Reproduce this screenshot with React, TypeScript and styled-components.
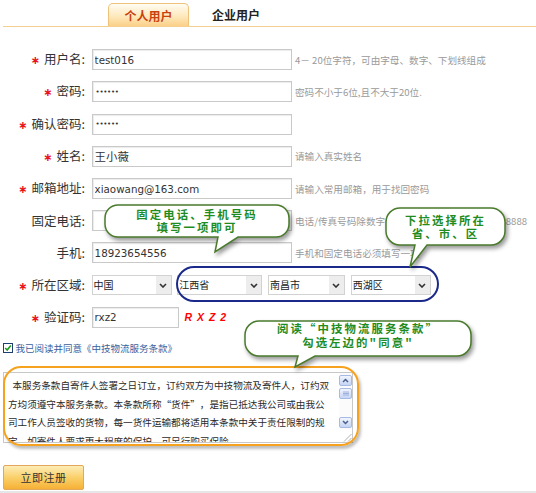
import React from "react";
import styled, { createGlobalStyle } from "styled-components";

const GlobalStyle = createGlobalStyle`
  html, body { margin: 0; padding: 0; background: #fff; }
  body { font-family: "Noto Sans CJK SC", "Liberation Sans", sans-serif; color: #333; }
  * { box-sizing: border-box; }
`;

const Page = styled.div`
  position: relative;
  width: 536px;
  height: 493px;
  overflow: hidden;
  display: flex;
  flex-direction: column;
  background: #fff;
`;

const TabBar = styled.div`
  display: flex;
  align-items: flex-end;
  height: 27px;
  margin-left: 3px;
  padding-left: 105px;
  border-bottom: 1px solid #f3cf92;
`;

const ActiveTab = styled.div`
  width: 81px;
  height: 23px;
  border: 1px solid #efc27c;
  border-bottom: 0;
  border-radius: 5px 5px 0 0;
  background: linear-gradient(#fffcf2 0%, #fee9bd 55%, #fbd088 100%);
  color: #c9410e;
  font-weight: 700;
  font-size: 12px;
  display: flex;
  align-items: center;
  justify-content: center;
`;

const Tab = styled.div`
  height: 23px;
  padding-left: 23px;
  display: flex;
  align-items: center;
  font-weight: 700;
  font-size: 12px;
  color: #222;
`;

const Form = styled.div`
  display: flex;
  flex-direction: column;
  gap: 11.2px;
  margin-top: 22.3px;
`;

const Row = styled.div`
  display: flex;
  align-items: center;
  height: 21px;
`;

const Label = styled.div`
  width: 91.6px;
  flex: none;
  padding-right: 6.6px;
  text-align: right;
  font-size: 12.5px;
  color: #333;
  white-space: nowrap;
  line-height: 21px;
`;

const Star = styled.span`
  color: #e8141c;
  font-family: "DejaVu Sans", sans-serif;
  font-size: 11px;
  font-weight: 700;
  margin-right: 4px;
`;

const TextInput = styled.input<{ $w?: number; $cjk?: boolean }>`
  width: ${(p) => p.$w ?? 200}px;
  height: 21px;
  flex: none;
  border: 1px solid #c9c9c9;
  box-shadow: inset 1px 1px 1px #ececec;
  padding: 0 2px;
  font-family: "DejaVu Sans", "Noto Sans CJK SC", sans-serif;
  font-size: ${(p) => (p.$cjk ? 11.4 : 10.3)}px;
  color: #333;
  background: #fff;
  outline: none;
`;

const PasswordInput = styled(TextInput)`
  font-size: 7px;
  letter-spacing: -0.3px;
  padding-left: 3px;
`;

const Hint = styled.span`
  margin-left: 3.4px;
  font-size: 9.6px;
  color: #9a9a9a;
  white-space: nowrap;
`;

const Code = styled.span`
  margin-left: 6px;
  font-family: "Liberation Sans", sans-serif;
  font-weight: 700;
  font-style: italic;
  font-size: 10.5px;
  letter-spacing: 1px;
  color: #f00;
`;

const SelectGroup = styled.div`
  display: flex;
  gap: 5.7px;
`;

const SelectBox = styled.div<{ $w: number }>`
  width: ${(p) => p.$w}px;
  height: 20px;
  display: flex;
  border: 1px solid #d2d2d2;
  background: #fff;
`;

const SelectText = styled.span`
  flex: 1;
  padding-left: 1px;
  font-size: 10px;
  line-height: 18px;
  color: #222;
  white-space: nowrap;
`;

const SelectArrow = styled.span`
  width: 15px;
  display: flex;
  align-items: center;
  justify-content: center;
  background: #ededed;
`;

const AgreeRow = styled.div`
  display: flex;
  align-items: center;
  gap: 2px;
  height: 12px;
  margin-top: 14px;
  padding-left: 3.4px;
  font-size: 9.5px;
  color: #3a5f9e;
`;

const TermsBox = styled.div`
  margin: 18px 0 0 3px;
  width: 350px;
  height: 71px;
  border: 1px solid #c8c8c8;
  display: flex;
  background: #fff;
`;

const TermsText = styled.div`
  flex: 1;
  padding: 3.5px 6px 0 4px;
  font-size: 9.6px;
  line-height: 18.5px;
  color: #2a2a2a;
  text-indent: 4.5px;
  text-spacing-trim: space-all;
  overflow: hidden;
`;

const ScrollCol = styled.div`
  width: 13px;
  flex: none;
  display: flex;
  flex-direction: column;
  padding-top: 2px;
  background: #fbfbfb;
`;

const ScrollBtn = styled.div<{ $gap?: number }>`
  height: 11px;
  margin-top: ${(p) => p.$gap ?? 0}px;
  border: 1px solid #a6bae4;
  border-radius: 2px;
  background: linear-gradient(#f1f5fe, #c5d5f5);
  display: flex;
  align-items: center;
  justify-content: center;
`;

const ScrollTrack = styled.div`
  flex: 1;
`;

const Resizer = styled.div`
  height: 13px;
  margin-top: 1px;
  display: flex;
  align-items: flex-end;
  justify-content: flex-end;
  background: #fff;
`;

const SubmitButton = styled.button`
  margin: 22px 0 0 3px;
  width: 81px;
  height: 25px;
  border: 1px solid #e2a75a;
  border-radius: 2px;
  background: linear-gradient(#fdedb6 0%, #fad06a 50%, #f6b136 100%);
  font-family: "Noto Sans CJK SC", sans-serif;
  font-size: 11px;
  letter-spacing: 0.5px;
  color: #333;
  padding: 0;
`;

const BottomStrip = styled.div`
  margin-top: auto;
  height: 2px;
  background: #e6e6e6;
`;

const RegionRing = styled.div`
  position: absolute;
  left: 176px;
  top: 266px;
  width: 263px;
  height: 36px;
  border: 2px solid #1b2a8a;
  border-radius: 18px;
  pointer-events: none;
`;

const TermsRing = styled.div`
  position: absolute;
  left: 3px;
  top: 366px;
  width: 356px;
  height: 80px;
  border: 2px solid #f7a21e;
  border-radius: 18px;
  box-shadow: 2px 3px 3px rgba(0, 0, 0, 0.25);
  pointer-events: none;
`;

const CalloutBox = styled.div<{ $x: number; $y: number; $w: number; $h: number; $pb?: number }>`
  position: absolute;
  left: ${(p) => p.$x}px;
  top: ${(p) => p.$y}px;
  width: ${(p) => p.$w}px;
  height: ${(p) => p.$h}px;
  padding-bottom: ${(p) => p.$pb ?? 0}px;
  display: flex;
  flex-direction: column;
  align-items: center;
  justify-content: center;
`;

const CalloutShape = styled.svg`
  position: absolute;
  left: 0;
  top: 0;
  overflow: visible;
  filter: drop-shadow(2px 3px 2px rgba(0, 0, 0, 0.4));
`;

const CalloutLine = styled.div<{ $lh?: number }>`
  position: relative;
  font-weight: 700;
  font-size: 11.4px;
  letter-spacing: 2.1px;
  line-height: ${(p) => p.$lh ?? 13}px;
  color: #1f8c1f;
  white-space: nowrap;
  text-align: center;
`;

type CalloutProps = {
  x: number;
  y: number;
  w: number;
  h: number;
  r: number;
  tl: number;
  tr: number;
  tx: number;
  ty: number;
  lines: string[];
  lh?: number;
  pb?: number;
};

function Callout({ x, y, w, h, r, tl, tr, tx, ty, lines, lh, pb }: CalloutProps) {
  const d = `M${r} 0 H${w - r} A${r} ${r} 0 0 1 ${w} ${r} V${h - r} A${r} ${r} 0 0 1 ${w - r} ${h} H${tr} L${tx} ${ty} L${tl} ${h} H${r} A${r} ${r} 0 0 1 0 ${h - r} V${r} A${r} ${r} 0 0 1 ${r} 0 Z`;
  return (
    <CalloutBox $x={x} $y={y} $w={w} $h={h} $pb={pb}>
      <CalloutShape width={w} height={h}>
        <path d={d} fill="#fff" stroke="#4a7b2c" strokeWidth={1.5} />
      </CalloutShape>
      {lines.map((l) => (
        <CalloutLine key={l} $lh={lh}>
          {l}
        </CalloutLine>
      ))}
    </CalloutBox>
  );
}

const Chevron = () => (
  <svg width="8" height="5" viewBox="0 0 8 5">
    <path d="M1 1 L4 4 L7 1" stroke="#333" strokeWidth="1.6" fill="none" />
  </svg>
);

function Select({ w, text }: { w: number; text: string }) {
  return (
    <SelectBox $w={w}>
      <SelectText>{text}</SelectText>
      <SelectArrow>
        <Chevron />
      </SelectArrow>
    </SelectBox>
  );
}

const Req = () => <Star>∗</Star>;

const terms =
  "本服务条款自寄件人签署之日订立，订约双方为中技物流及寄件人，订约双方均须遵守本服务条款。本条款所称“货件”，是指已抵达我公司或由我公司工作人员签收的货物，每一货件运输都将适用本条款中关于责任限制的规定，如寄件人要求更大程度的保护，可另行购买保险。";

export default function App() {
  return (
    <Page>
      <GlobalStyle />
      <TabBar>
        <ActiveTab>个人用户</ActiveTab>
        <Tab>企业用户</Tab>
      </TabBar>

      <Form>
        <Row>
          <Label>
            <Req />用户名:
          </Label>
          <TextInput readOnly value="test016" />
          <Hint>4－ 20位字符，可由字母、数字、下划线组成</Hint>
        </Row>
        <Row>
          <Label>
            <Req />密码:
          </Label>
          <PasswordInput type="password" readOnly value="123456" />
          <Hint>密码不小于6位,且不大于20位.</Hint>
        </Row>
        <Row>
          <Label>
            <Req />确认密码:
          </Label>
          <PasswordInput type="password" readOnly value="123456" />
        </Row>
        <Row>
          <Label>
            <Req />姓名:
          </Label>
          <TextInput readOnly value="王小薇" $cjk />
          <Hint>请输入真实姓名</Hint>
        </Row>
        <Row>
          <Label>
            <Req />邮箱地址:
          </Label>
          <TextInput readOnly value="xiaowang@163.com" />
          <Hint>请输入常用邮箱，用于找回密码</Hint>
        </Row>
        <Row>
          <Label>固定电话:</Label>
          <TextInput readOnly value="" />
          <Hint>电话/传真号码除数字外，可用-分隔，如0791-8888888</Hint>
        </Row>
        <Row>
          <Label>手机:</Label>
          <TextInput readOnly value="18923654556" />
          <Hint>手机和固定电话必须填写一项</Hint>
        </Row>
        <Row>
          <Label>
            <Req />所在区域:
          </Label>
          <SelectGroup>
            <Select w={80} text="中国" />
            <Select w={85} text="江西省" />
            <Select w={77} text="南昌市" />
            <Select w={80} text="西湖区" />
          </SelectGroup>
        </Row>
        <Row>
          <Label>
            <Req />验证码:
          </Label>
          <TextInput readOnly value="rxz2" $w={87} />
          <Code>R X Z 2</Code>
        </Row>
      </Form>

      <AgreeRow>
        <svg width="10" height="10" viewBox="0 0 10 10">
          <rect x="0.5" y="0.5" width="9" height="9" fill="#fff" stroke="#1c3f74" />
          <path d="M2.2 5 L4.2 7 L7.8 2.6" stroke="#1f9a1f" strokeWidth="1.6" fill="none" />
        </svg>
        <span>我已阅读并同意《中技物流服务条款》</span>
      </AgreeRow>

      <TermsBox>
        <TermsText>{terms}</TermsText>
        <ScrollCol>
          <ScrollBtn>
            <svg width="7" height="5" viewBox="0 0 7 5">
              <path d="M1 4 L3.5 1.5 L6 4" stroke="#4b5f8b" strokeWidth="1.5" fill="none" />
            </svg>
          </ScrollBtn>
          <ScrollBtn $gap={2}>
            <svg width="6" height="5" viewBox="0 0 6 5">
              <path d="M0 1 H6 M0 2.5 H6 M0 4 H6" stroke="#8fa4d4" strokeWidth="0.8" />
            </svg>
          </ScrollBtn>
          <ScrollTrack />
          <ScrollBtn>
            <svg width="7" height="5" viewBox="0 0 7 5">
              <path d="M1 1 L3.5 3.5 L6 1" stroke="#4b5f8b" strokeWidth="1.5" fill="none" />
            </svg>
          </ScrollBtn>
          <Resizer>
            <svg width="10" height="10" viewBox="0 0 10 10">
              <path d="M9.5 2 L2 9.5 M9.5 6 L6 9.5" stroke="#b0b0b0" strokeWidth="1" />
            </svg>
          </Resizer>
        </ScrollCol>
      </TermsBox>

      <SubmitButton type="button">立即注册</SubmitButton>
      <BottomStrip />

      <RegionRing />
      <TermsRing />

      <Callout
        x={105}
        y={205}
        w={184}
        h={32}
        r={13}
        tl={113}
        tr={133}
        tx={110}
        ty={47}
        lines={["固定电话、手机号码", "填写一项即可"]}
      />
      <Callout
        x={386}
        y={208}
        w={119}
        h={37}
        r={14}
        tl={29}
        tr={41}
        tx={24}
        ty={59}
        lines={["下拉选择所在", "省、市、区"]}
      />
      <Callout
        x={245}
        y={321}
        w={226}
        h={35}
        r={14}
        tl={53}
        tr={70}
        tx={50}
        ty={46}
        lh={13.4}
        pb={6}
        lines={["阅读“中技物流服务条款”", "勾选左边的\"同意\""]}
      />
    </Page>
  );
}
